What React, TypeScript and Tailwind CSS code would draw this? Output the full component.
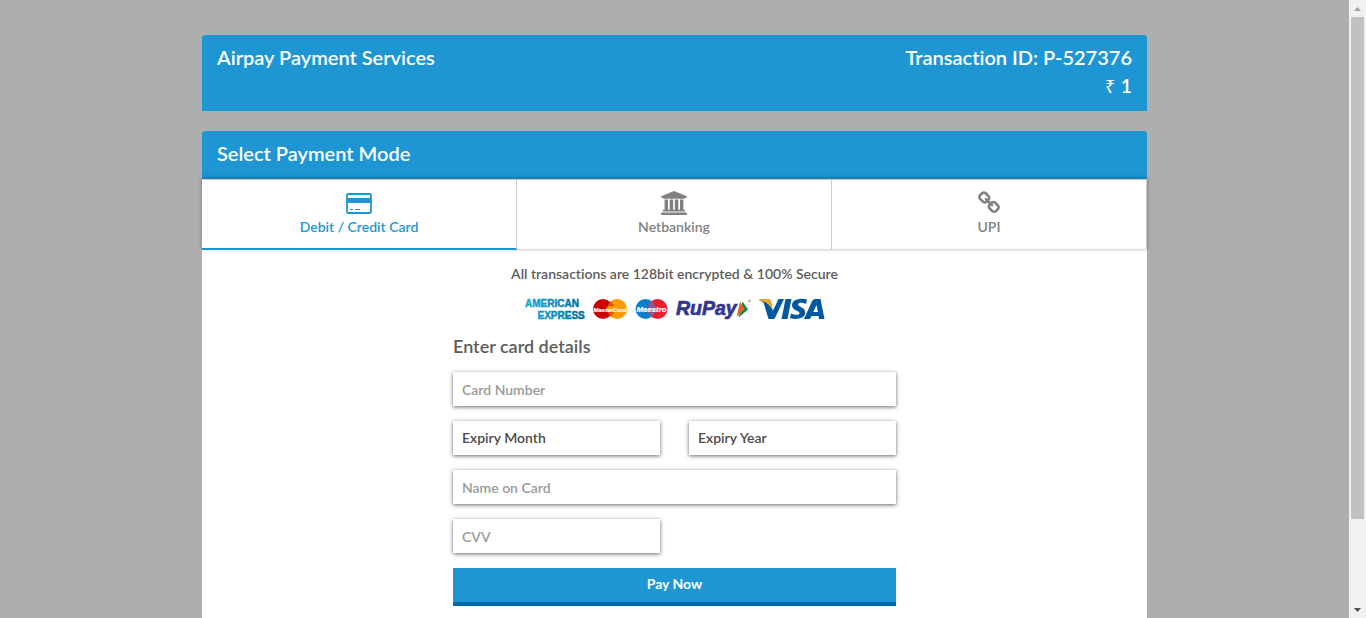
import { useState, type ReactNode } from "react";

const fieldClass =
  "block h-[34px] w-full appearance-none rounded-none bg-white px-[9px] text-sm font-semibold text-[#4a4a4a] shadow-[0_1px_4px_rgba(0,0,0,0.6)] outline-none placeholder:text-[#999]";

function CardIcon() {
  return (
    <svg className="h-6 w-[26px]" viewBox="0 0 26 24" aria-hidden="true">
      <rect x="1" y="3" width="24" height="19" rx="1.2" fill="none" stroke="currentColor" strokeWidth="1.8" />
      <rect x="1" y="7" width="24" height="5" fill="currentColor" />
      <path d="M4 18.500h3M9 18.500h5" stroke="currentColor" strokeWidth="1.2" />
    </svg>
  );
}

function BankIcon() {
  return (
    <svg className="h-6 w-[26px]" viewBox="0 0 1920 1792" fill="currentColor" aria-hidden="true">
      <path d="M960 0l960 384v128h-128q0 26-20.500 45t-48.500 19h-1526q-28 0-48.500-19t-20.500-45h-128v-128zM256 640h256v768h128v-768h256v768h128v-768h256v768h128v-768h256v768h59q28 0 48.500 19t20.500 45v64h-1664v-64q0-26 20.500-45t48.500-19h59v-768zM1851 1600q28 0 48.500 19t20.500 45v128h-1920v-128q0-26 20.500-45t48.500-19h1782z" />
    </svg>
  );
}

function ChainIcon() {
  return (
    <svg className="size-6" viewBox="0 0 1792 1792" fill="currentColor" aria-hidden="true">
      <path d="M1520 1216q0-40-28-68l-208-208q-28-28-68-28-42 0-72 32 3 3 19 18.500t21.500 21.500 15 19 13 25.500 3.500 27.500q0 40-28 68t-68 28q-15 0-27.500-3.500t-25.500-13-19-15-21.500-21.500-18.500-19q-33 31-33 73 0 40 28 68l206 207q27 27 68 27 40 0 68-26l147-146q28-28 28-67zm-703-705q0-40-28-68l-206-207q-28-28-68-28-39 0-68 27l-147 146q-28 28-28 67 0 40 28 68l208 208q27 27 68 27 42 0 72-31-3-3-19-18.500t-21.500-21.500-15-19-13-25.500-3.500-27.500q0-40 28-68t68-28q15 0 27.500 3.500t25.500 13 19 15 21.500 21.500 18.500 19q33-31 33-73zm895 705q0 120-85 203l-147 146q-83 83-203 83-121 0-204-85l-206-207q-83-83-83-203 0-123 88-209l-88-88q-86 88-208 88-120 0-204-84l-208-208q-84-84-84-204t85-203l147-146q83-83 203-83 121 0 204 85l206 207q83 83 83 203 0 123-88 209l88 88q86-88 208-88 120 0 204 84l208 208q84 84 84 204z" />
    </svg>
  );
}

function CardBrands() {
  return (
    <div className="mt-[13px] flex h-6 justify-center gap-2">
      <svg className="h-6 w-[60px]" viewBox="0 0 60 24" role="img" aria-label="American Express">
        <defs>
          <linearGradient id="amex" x1="0" x2="60" y1="0" y2="0" gradientUnits="userSpaceOnUse">
            <stop offset="0" stopColor="#12abe2" />
            <stop offset="1" stopColor="#006a96" />
          </linearGradient>
        </defs>
        <g fill="url(#amex)" stroke="url(#amex)" strokeWidth="0.5" fontFamily="Liberation Sans, sans-serif" fontWeight="700" fontSize="10">
          <text x="0" y="9.500">AMERICAN</text>
          <text x="12.500" y="21.500">EXPRESS</text>
        </g>
      </svg>
      <svg className="h-6 w-[34px]" viewBox="0 0 34 24" role="img" aria-label="MasterCard">
        <circle cx="10" cy="12" r="10" fill="#c00" />
        <circle cx="24" cy="12" r="10" fill="#f90" />
        <path d="M14 6h5M13.500 8h7M13.500 16h7M14 18h5" stroke="#c00" strokeWidth="1" />
        <text x="17" y="14.500" textAnchor="middle" fill="#fff" stroke="#fff" strokeWidth="0.2" fontFamily="Liberation Sans Narrow, Liberation Sans, sans-serif" fontWeight="700" fontStyle="italic" fontSize="6">MasterCard</text>
      </svg>
      <svg className="h-6 w-[33px]" viewBox="0 0 33 24" role="img" aria-label="Maestro">
        <circle cx="10.500" cy="12" r="10" fill="#0c7fcb" />
        <circle cx="22.500" cy="12" r="10" fill="#eb1c2d" />
        <path d="M16.500 4a10 10 0 0 1 0 16a10 10 0 0 1 0-16" fill="#8c5a90" />
        <text x="16.500" y="14.500" textAnchor="middle" fill="#fff" stroke="#fff" strokeWidth="0.2" fontFamily="Liberation Sans, sans-serif" fontWeight="700" fontStyle="italic" fontSize="7.8">Maestro</text>
      </svg>
      <svg className="h-6 w-[75px]" viewBox="0 0 75 24" role="img" aria-label="RuPay">
        <text x="0" y="18" fill="#34358d" stroke="#34358d" strokeWidth="0.7" fontFamily="Liberation Sans, sans-serif" fontWeight="700" fontStyle="italic" fontSize="19.5">RuPay</text>
        <path d="M66.500 4.500l5.500 8-9.500 8z" fill="#12883f" />
        <path d="M64 4.500l4.500 7.500-8 8z" fill="#f2652a" />
        <circle cx="73.500" cy="4" r="1.1" fill="#bbb" stroke="#999" strokeWidth="0.5" />
      </svg>
      <svg className="h-6 w-[66px]" viewBox="0 0 66 24" role="img" aria-label="Visa">
        <path d="M25 2L15.500 22H9.500L5 7C4.500 5 3 4 0 3V2h9c1.600 0 2.600 1 3 3l1.800 9L19.500 2z" fill="#0058a0" />
        <path d="M0 2h9c1.600 0 2.600 1 3 3l1.500 8C11 8 7 4.500 0 3z" fill="#f9a51a" />
        <path d="M26.500 2h6l-4 20h-6z" fill="#0058a0" />
        <path d="M48 2.500l-1 4.500c-3-1.500-8-1.800-8 .5 0 2.500 7.300 2.700 7.300 8 0 6.500-10 7.500-15.300 5.500l1-4.500c3 1.600 8.500 1.800 8.500-.3 0-2.700-7.500-2.700-7.500-8 0-6 9-7.700 15-5.700z" fill="#0058a0" />
        <path fillRule="evenodd" d="M56 2h5.500l4 20h-5.500l-.6-3h-6.800l-1.600 3h-6l8-17.700C53.800 3 54.600 2 56 2zM57.500 8l-3.200 7h4.600z" fill="#0058a0" />
      </svg>
    </div>
  );
}

const tabs: { label: string; icon: ReactNode }[] = [
  { label: "Debit / Credit Card", icon: <CardIcon /> },
  { label: "Netbanking", icon: <BankIcon /> },
  { label: "UPI", icon: <ChainIcon /> },
];

export default function App() {
  const [active, setActive] = useState(0);

  return (
    <div className="flex h-screen bg-[#aeaeae] font-['Lato',sans-serif] text-sm text-[#5c5c5c] [font-variant-ligatures:none]">
      <main className="h-full min-w-0 flex-1 overflow-hidden">
        <div className="mx-auto flex min-h-full w-full max-w-[945px] flex-col pt-[35px]">
          <header className="flex justify-between rounded-t-[3px] bg-[#1e96d4] px-[15px] pt-2 pb-3 text-xl leading-7 font-semibold text-white">
            <h1>Airpay Payment Services</h1>
            <div className="text-right">
              <p>Transaction ID: P-527376</p>
              <p>
                <span className="font-['Noto_Sans',sans-serif] text-lg leading-none font-normal">₹</span> 1
              </p>
            </div>
          </header>

          <h2 className="mt-5 rounded-t-[3px] bg-[#1e96d4] px-[15px] pt-2 pb-3 text-xl leading-7 font-semibold text-white">
            Select Payment Mode
          </h2>

          <section className="flex-1 bg-white pb-6">
            <div role="tablist" className="grid grid-cols-3 border-t border-[#ccc] shadow-[0_-1px_4px_rgba(0,0,0,0.3)]">
              {tabs.map((tab, i) => (
                <button
                  key={tab.label}
                  role="tab"
                  aria-selected={active === i}
                  onClick={() => setActive(i)}
                  className={
                    active === i
                      ? "flex h-[70px] flex-col items-center border-r border-b-2 border-r-[#ccc] border-b-[#1e96d4] bg-white pt-[11px] font-semibold text-[#1e96d4]"
                      : "flex h-[70px] flex-col items-center border-r border-b border-r-[#ccc] border-b-[#ddd] bg-white pt-[11px] font-semibold text-[#808080]"
                  }
                >
                  <span className="flex h-[26px] items-start">{tab.icon}</span>
                  <span className="leading-5">{tab.label}</span>
                </button>
              ))}
            </div>

            <p className="mt-3.5 text-center leading-5 font-semibold">
              All transactions are 128bit encrypted &amp; 100% Secure
            </p>
            <CardBrands />

            <form className="mx-auto mt-[13px] w-full max-w-[443px]" onSubmit={(e) => e.preventDefault()}>
              <h3 className="mb-3.5 text-lg leading-6 font-semibold">Enter card details</h3>
              <div className="grid grid-cols-2 gap-x-[29px] gap-y-[15px]">
                <input className={`${fieldClass} col-span-2`} placeholder="Card Number" aria-label="Card Number" />
                <select className={fieldClass} aria-label="Expiry Month">
                  <option>Expiry Month</option>
                </select>
                <select className={fieldClass} aria-label="Expiry Year">
                  <option>Expiry Year</option>
                </select>
                <input className={`${fieldClass} col-span-2`} placeholder="Name on Card" aria-label="Name on Card" />
                <input className={fieldClass} placeholder="CVV" aria-label="CVV" />
                <button
                  type="submit"
                  className="col-span-2 h-[38px] border-b-4 border-[#0069a8] bg-[#1e96d4] pb-0.5 font-bold text-white"
                >
                  Pay Now
                </button>
              </div>
            </form>
          </section>
        </div>
      </main>

      <div className="flex h-full w-[17px] flex-col items-center bg-[#f1f1f1]" aria-hidden="true">
        <svg className="h-[17px] w-[17px] shrink-0" viewBox="0 0 17 17">
          <path d="M5 11h7L8.500 7z" fill="#a3a3a3" />
        </svg>
        <div className="min-h-0 w-full flex-1 px-0.5">
          <div className="h-[86%] bg-[#c1c1c1]" />
        </div>
        <svg className="h-[17px] w-[17px] shrink-0" viewBox="0 0 17 17">
          <path d="M5 7h7L8.500 11z" fill="#505050" />
        </svg>
      </div>
    </div>
  );
}
